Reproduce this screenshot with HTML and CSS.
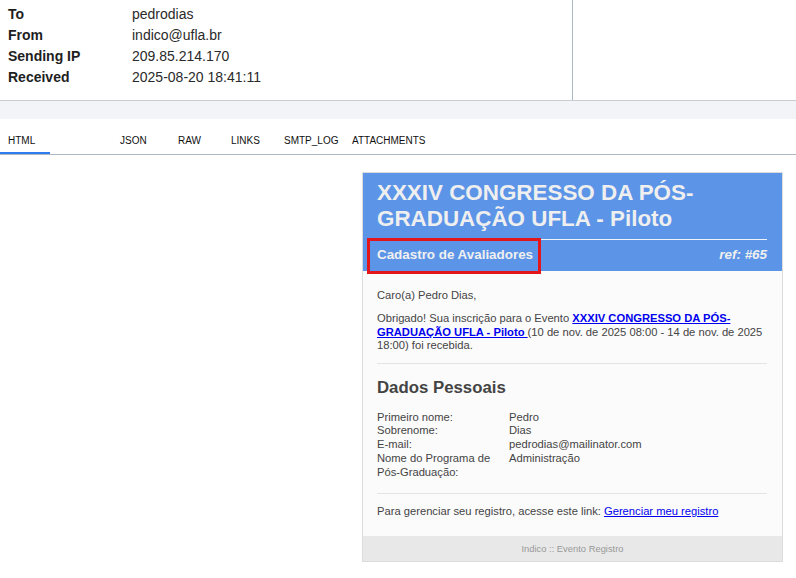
FILE: index.html
```html
<!DOCTYPE html>
<html lang="pt">
<head>
<meta charset="utf-8">
<title>Email</title>
<link rel="stylesheet" href="styles.css">
</head>
<body>
<div class="meta">
  <div class="meta-left">
    <div class="row"><span class="k">To</span><span class="v">pedrodias</span></div>
    <div class="row"><span class="k">From</span><span class="v">indico@ufla.br</span></div>
    <div class="row"><span class="k">Sending IP</span><span class="v">209.85.214.170</span></div>
    <div class="row"><span class="k">Received</span><span class="v">2025-08-20 18:41:11</span></div>
  </div>
  <div class="meta-right"></div>
</div>
<div class="band"></div>
<nav class="tabs">
  <span class="tab tab-html active">HTML</span>
  <span class="tab tab-json">JSON</span>
  <span class="tab tab-raw">RAW</span>
  <span class="tab tab-links">LINKS</span>
  <span class="tab tab-smtp">SMTP_LOG</span>
  <span class="tab tab-att">ATTACHMENTS</span>
</nav>
<main class="viewer">
  <div class="card">
    <div class="card-head">
      <h1 class="title">XXXIV CONGRESSO DA PÓS-GRADUAÇÃO UFLA - Piloto</h1>
      <div class="subrow">
        <span class="sub">Cadastro de Avaliadores</span>
        <span class="ref">ref: #65</span>
        <span class="highlight"></span>
      </div>
    </div>
    <div class="card-body">
      <p>Caro(a) Pedro Dias,</p>
      <p class="thanks">Obrigado! Sua inscrição para o Evento <a href="#" class="evlink">XXXIV CONGRESSO DA PÓS-GRADUAÇÃO UFLA - Piloto </a>(10 de nov. de 2025 08:00 - 14 de nov. de 2025 18:00) foi recebida.</p>
      <hr>
      <h2>Dados Pessoais</h2>
      <table class="data">
        <tr><td class="lab">Primeiro nome:</td><td>Pedro</td></tr>
        <tr><td class="lab">Sobrenome:</td><td>Dias</td></tr>
        <tr><td class="lab">E-mail:</td><td>pedrodias@mailinator.com</td></tr>
        <tr><td class="lab">Nome do Programa de Pós-Graduação:</td><td>Administração</td></tr>
      </table>
      <hr class="hr2">
      <p class="manage">Para gerenciar seu registro, acesse este link: <a href="#">Gerenciar meu registro</a></p>
    </div>
    <div class="card-foot">Indico :: Evento Registro</div>
  </div>
</main>
</body>
</html>
```
FILE: styles.css
```css
* { box-sizing: border-box; }
html, body { margin: 0; padding: 0; background: #fff; }
body { font-family: "Liberation Sans", Arial, sans-serif; color: #222; width: 796px; }

.meta { display: flex; height: 101px; border-bottom: 1px solid #c9ccd0; box-shadow: 0 1px 1px #d8dadd; }
.meta-left { width: 573px; border-right: 1px solid #a9b9c5; padding: 4px 0 0 8px; }
.meta-right { flex: 1; }
.row { display: flex; font-size: 14px; line-height: 21px; }
.k { width: 124px; font-weight: bold; color: #1e1e1e; }
.v { color: #2a2a2a; }

.band { height: 18px; background: #f3f4f8; }

.tabs { display: flex; height: 36px; border-bottom: 1px solid #aeb8c2; align-items: stretch; }
.tab { font-size: 10px; color: #111; padding: 16px 0 0 8px; position: relative; }
.tab-html { width: 112px; }
.tab-json { width: 58px; }
.tab-raw { width: 53px; }
.tab-links { width: 53px; }
.tab-smtp { width: 68px; }
.tab.active::after { content: ""; position: absolute; left: 0; bottom: 0; width: 50px; height: 2px; background: #2f7bf0; }

.viewer { display: flex; justify-content: flex-end; padding: 17px 13px 0 0; }
.card { width: 421px; border: 1px solid #dcdcdc; background: #fbfbfb; position: relative; }
.card-head { background: #5c95e8; padding: 7px 15px 8px 14px; color: #f0f0f0; }
.title { margin: 0; font-size: 22.4px; line-height: 26px; font-weight: bold; color: #efefef; padding-bottom: 7px; border-bottom: 1px solid #eef2fa; }
.subrow { display: flex; justify-content: space-between; align-items: center; padding-top: 7px; font-size: 13.4px; line-height: 16px; font-weight: bold; }
.ref { font-style: italic; }
.highlight { position: absolute; left: 4px; top: 65px; width: 174px; height: 36px; border: 3px solid #e3161c; }

.card-body { padding: 18px 15px 17px 14px; font-size: 11.2px; line-height: 13.5px; color: #444; }
.card-body p { margin: 0 0 9.5px 0; }
.card-body p.thanks { margin-bottom: 0; }
.card-body a { color: #0000ee; }
.evlink { font-weight: bold; }
hr { border: 0; border-top: 1px solid #e4e4e4; margin: 10px 0 14px 0; }
h2 { margin: 0 0 13px 0; font-size: 16.8px; line-height: 20px; color: #444; }
.data { border-collapse: collapse; font-size: 11.2px; color: #444; }
.data td { padding: 0; vertical-align: top; line-height: 13.75px; }
.data td.lab { width: 132px; padding-right: 12px; }
.hr2 { margin: 14px 0 11px 0; }
.card-body .manage { margin: 0; }
.card-foot { background: #e8e8e8; height: 25px; line-height: 25px; text-align: center; font-size: 9.4px; color: #999; }
```
